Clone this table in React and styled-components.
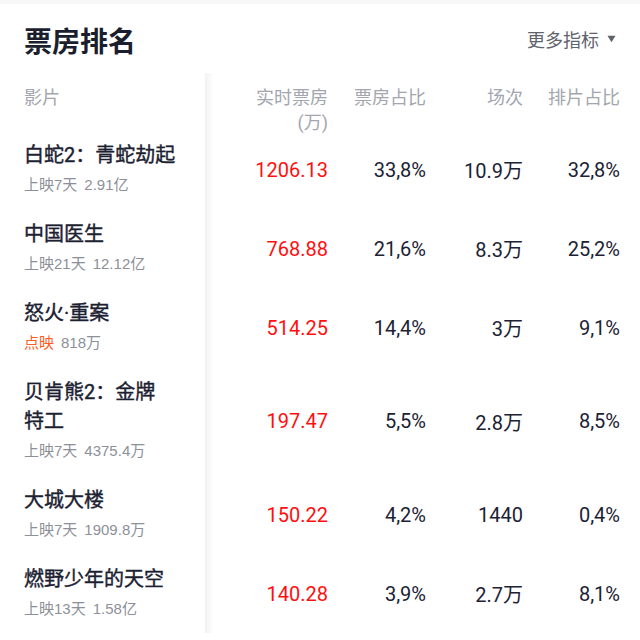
import React from 'react';
import styled, { createGlobalStyle } from 'styled-components';

const GlobalStyle = createGlobalStyle`
  body {
    margin: 0;
    background: #ffffff;
    font-family: Roboto, "Noto Sans CJK SC", sans-serif;
  }
`;

const films = [
  { title: '白蛇2：青蛇劫起', tag: '上映7天', total: '2.91亿', box: '1206.13', share: '33,8%', shows: '10.9万', showShare: '32,8%' },
  { title: '中国医生', tag: '上映21天', total: '12.12亿', box: '768.88', share: '21,6%', shows: '8.3万', showShare: '25,2%' },
  { title: '怒火·重案', tag: '点映', hot: true, total: '818万', box: '514.25', share: '14,4%', shows: '3万', showShare: '9,1%' },
  { title: '贝肯熊2：金牌\n特工', tag: '上映7天', total: '4375.4万', box: '197.47', share: '5,5%', shows: '2.8万', showShare: '8,5%' },
  { title: '大城大楼', tag: '上映7天', total: '1909.8万', box: '150.22', share: '4,2%', shows: '1440', showShare: '0,4%' },
  { title: '燃野少年的天空', tag: '上映13天', total: '1.58亿', box: '140.28', share: '3,9%', shows: '2.7万', showShare: '8,1%' },
];

function App() {
  return (
    <Page>
      <GlobalStyle />
      <TopStrip />
      <TitleBar>
        <Title>票房排名</Title>
        <MoreButton>
          更多指标
          <svg width="9" height="8" viewBox="0 0 9 8">
            <path d="M0.5 0.8 L8.5 0.8 L4.5 7.2 Z" fill="#5f636d" />
          </svg>
        </MoreButton>
      </TitleBar>

      <Table>
        <HeadCell $left>影片</HeadCell>
        <HeadCell>实时票房<br />(万)</HeadCell>
        <HeadCell>票房占比</HeadCell>
        <HeadCell>场次</HeadCell>
        <HeadCell>排片占比</HeadCell>

        {films.map((f) => (
          <React.Fragment key={f.title}>
            <FilmCell>
              <FilmTitle>{f.title}</FilmTitle>
              <FilmMeta>
                <MetaTag $hot={f.hot}>{f.tag}</MetaTag>
                <span>{f.total}</span>
              </FilmMeta>
            </FilmCell>
            <ValueCell $red>{f.box}</ValueCell>
            <ValueCell>{f.share}</ValueCell>
            <ValueCell>{f.shows}</ValueCell>
            <ValueCell>{f.showShare}</ValueCell>
          </React.Fragment>
        ))}
      </Table>
    </Page>
  );
}

export default App;

const Page = styled.div`
  width: 640px;
  height: 640px;
  overflow: hidden;
  background: #ffffff;
`;

const TopStrip = styled.div`
  height: 4px;
  background: #f7f7f8;
`;

const TitleBar = styled.div`
  height: 69px;
  display: flex;
  align-items: center;
  justify-content: space-between;
  padding: 0 24px 0 24px;
`;

const Title = styled.h1`
  margin: 2px 0 0;
  font-size: 28px;
  font-weight: 700;
  color: #1b1f2d;
  font-family: "Noto Sans CJK SC", sans-serif;
`;

const MoreButton = styled.div`
  display: flex;
  align-items: center;
  gap: 8px;
  font-size: 18px;
  color: #5f636d;
  font-family: "Noto Sans CJK SC", sans-serif;
`;

const Table = styled.div`
  position: relative;
  display: grid;
  grid-template-columns: 205px 123px 98px 97px 97px;
  grid-template-rows: 57px;
  padding-right: 20px;

  &::after {
    content: '';
    position: absolute;
    top: 0;
    bottom: 0;
    left: 205px;
    width: 9px;
    background: linear-gradient(to right, rgba(0, 0, 0, 0.05), rgba(0, 0, 0, 0));
  }
`;

const HeadCell = styled.div`
  padding-top: 12px;
  padding-left: ${(p) => (p.$left ? '24px' : '0')};
  text-align: ${(p) => (p.$left ? 'left' : 'right')};
  font-size: 18px;
  line-height: 25px;
  color: #a3a6ae;
  font-family: Roboto, "Noto Sans CJK SC", sans-serif;
  white-space: nowrap;
`;

const FilmCell = styled.div`
  padding: 11px 0 10px 24px;
  display: flex;
  flex-direction: column;
  justify-content: center;
`;

const FilmTitle = styled.div`
  font-size: 20px;
  line-height: 29px;
  font-weight: 400;
  -webkit-text-stroke: 0.4px #1c2132;
  color: #1c2132;
  white-space: pre-line;
  font-family: Roboto, "Noto Sans CJK SC", sans-serif;
`;

const FilmMeta = styled.div`
  display: flex;
  gap: 7px;
  font-size: 15px;
  line-height: 29px;
  color: #8d9099;
  font-family: "Liberation Sans", "Noto Sans CJK SC", sans-serif;
`;

const MetaTag = styled.span`
  color: ${(p) => (p.$hot ? '#ff5b22' : '#8d9099')};
`;

const ValueCell = styled.div`
  display: flex;
  align-items: center;
  justify-content: flex-end;
  font-size: 20px;
  font-weight: 400;
  color: ${(p) => (p.$red ? '#ff0f0f' : '#1c2234')};
  font-family: Roboto, "Noto Sans CJK SC", sans-serif;
`;
